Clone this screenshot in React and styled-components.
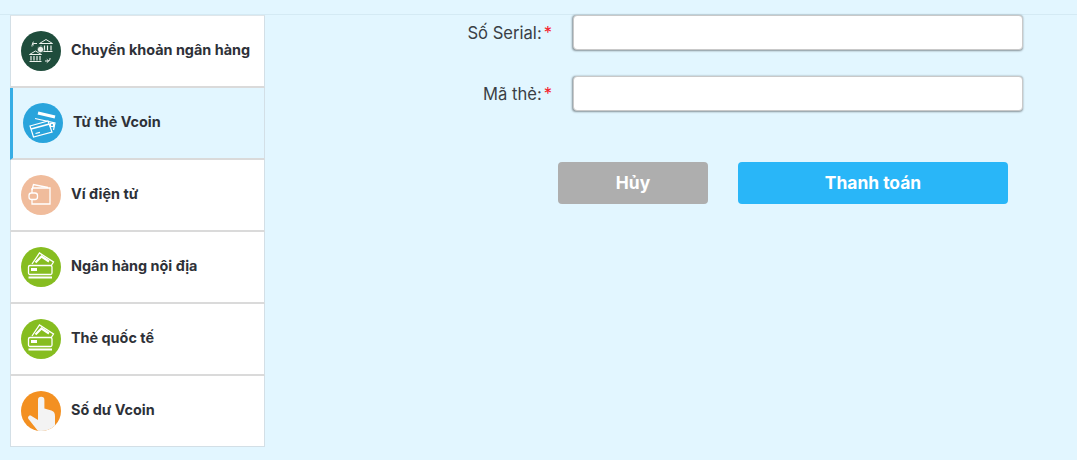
import React from 'react';
import styled, { createGlobalStyle } from 'styled-components';

const GlobalStyle = createGlobalStyle`
  html, body {
    margin: 0;
    padding: 0;
    background: #e2f6ff;
    font-family: 'Inter', 'Noto Sans', sans-serif;
  }
`;

const Page = styled.div`
  width: 1077px;
  height: 460px;
  overflow: hidden;
  background: #e2f6ff;
`;

const TopLine = styled.div`
  height: 14px;
  border-bottom: 1px solid #d4eaf4;
`;

const Main = styled.div`
  display: flex;
  padding-left: 10px;
`;

const Sidebar = styled.ul`
  list-style: none;
  margin: 0;
  padding: 0;
  width: 255px;
  flex-shrink: 0;
`;

const SideItem = styled.li`
  box-sizing: border-box;
  height: 72px;
  display: flex;
  align-items: center;
  gap: 10px;
  padding-left: 10px;
  background: ${(p) => (p.$active ? 'transparent' : '#fff')};
  border-left: ${(p) => (p.$active ? '3px solid #36ade5' : '1px solid #d3dfe6')};
  border-right: 1px solid #d3dfe6;
  border-bottom: 2px solid #dadada;

  &:first-child {
    height: 73px;
    border-top: 1px solid #dfe6ea;
  }

  &:last-child {
    height: 71px;
    border-bottom: 1px solid #d3dfe6;
  }
`;

const Circle = styled.span`
  width: 40px;
  height: 40px;
  border-radius: 50%;
  background: ${(p) => p.$color};
  flex-shrink: 0;
  overflow: hidden;
  display: block;

  svg {
    display: block;
  }
`;

const SideLabel = styled.span`
  font-size: 14.4px;
  font-weight: 650;
  line-height: 18px;
  margin-top: -2px;
  color: #2e3138;
  white-space: nowrap;
`;

const Content = styled.div`
  flex: 1;
`;

const Row = styled.div`
  display: flex;
  align-items: center;
  height: 35px;
  margin-bottom: 26px;
`;

const Label = styled.label`
  box-sizing: border-box;
  width: 287px;
  text-align: right;
  font-size: 16.6px;
  color: #3a3f45;
  white-space: nowrap;
`;

const Star = styled.span`
  color: #f5222d;
  margin-left: 2px;
`;

const Input = styled.input`
  box-sizing: border-box;
  width: 450px;
  height: 35px;
  margin-left: 21px;
  border: 1px solid #c9c9c9;
  border-radius: 4px;
  background: #fff;
  box-shadow: -0.5px 0.5px 2px rgba(0, 0, 0, 0.4);
  outline: none;
`;

const Actions = styled.div`
  display: flex;
  gap: 30px;
  margin-top: 51px;
  padding-left: 293px;
`;

const Button = styled.button`
  width: ${(p) => p.$width}px;
  height: 42px;
  padding: 0 0 2px;
  border: none;
  border-radius: 4px;
  background: ${(p) => p.$bg};
  color: #fff;
  font-family: 'Inter', 'Noto Sans', sans-serif;
  font-size: 17.4px;
  font-weight: 700;
`;

const BankIcon = () => (
  <svg width="40" height="40" viewBox="0 0 40 40" fill="none" stroke="#eef3ee" strokeWidth="1">
    <path d="M18.5 12.5 L25 8.5 L31.5 12.5 Z" />
    <path d="M20 14.5v5M23.5 14.5v5M26.5 14.5v5M30 14.5v5M18.5 20.5h13" strokeWidth="1.2" />
    <path d="M8.5 23.5 L14.5 20 L20.5 23.5 Z" />
    <path d="M10 25v4.5M13 25v4.5M16 25v4.5M19 25v4.5M8.5 30.5h12" strokeWidth="1.2" />
    <circle cx="19.5" cy="18.5" r="3.2" fill="#eef3ee" stroke="#1f4d3c" strokeWidth="0.8" />
    <path d="M16 12.5h-3a2 2 0 0 0-2 2v1M12.8 10.8 L11 12.5 L12.8 14.2M24 30h3a2 2 0 0 0 2-2v-1M25.8 28.3 L27.6 30 L25.8 31.7" />
  </svg>
);

const CardsIcon = () => (
  <svg width="40" height="40" viewBox="0 0 40 40" fill="none" stroke="#fff" strokeWidth="1.2">
    <path d="M15 10 L32 14" strokeWidth="3.2" />
    <path d="M12 15.5 L32 20 L30.5 27" />
    <path d="M7 23 L25 18 L29 29 L10.5 34 Z" fill="#29a4dc" />
    <path d="M8 26 L26.5 21" strokeWidth="1.8" />
    <path d="M12.5 30.5 L17 29.3" />
    <rect x="27.5" y="20.5" width="3" height="3" fill="#29a4dc" />
  </svg>
);

const WalletIcon = () => (
  <svg width="40" height="40" viewBox="0 0 40 40" fill="none" stroke="#fff" strokeWidth="1.3">
    <path d="M11 15 L12.5 9.5 L27 12.5" />
    <path d="M11 13 H29 V29 H11 V24.5" />
    <path d="M11 13 V18" />
    <rect x="8" y="18" width="8.5" height="6.5" rx="2.5" />
  </svg>
);

const BankCardIcon = () => (
  <svg width="40" height="40" viewBox="0 0 40 40" fill="none" stroke="#fff" strokeWidth="1.3">
    <path d="M11 17 L18.5 6 L32.5 15 L30 19" />
    <path d="M14.5 15.5 L20.5 9.5 L28 14.5" strokeWidth="2.2" />
    <rect x="7.5" y="18.5" width="23.5" height="9" rx="1.5" fill="#86bd20" />
    <rect x="10" y="21" width="6" height="3" fill="#fff" stroke="none" />
    <path d="M7.5 30.5 H31" strokeWidth="1.8" />
  </svg>
);

const HandIcon = () => (
  <svg width="40" height="40" viewBox="0 0 40 40">
    <path
      d="M17 9 a3.2 3.2 0 0 1 6.4 0 V17.5 l7 2 c3 1 3.6 3 3.6 6 V40 H17 L7.5 28 c-1.5-2 1-4.5 3-3 L17 29 Z"
      fill="#f3f3f3"
    />
  </svg>
);

const methods = [
  { label: 'Chuyển khoản ngân hàng', color: '#1f4d3c', Icon: BankIcon },
  { label: 'Từ thẻ Vcoin', color: '#29a4dc', Icon: CardsIcon, active: true },
  { label: 'Ví điện tử', color: '#f0bc9c', Icon: WalletIcon },
  { label: 'Ngân hàng nội địa', color: '#86bd20', Icon: BankCardIcon },
  { label: 'Thẻ quốc tế', color: '#86bd20', Icon: BankCardIcon },
  { label: 'Số dư Vcoin', color: '#f39021', Icon: HandIcon },
];

const App = () => (
  <Page>
    <GlobalStyle />
    <TopLine />
    <Main>
      <Sidebar>
        {methods.map(({ label, color, Icon, active }) => (
          <SideItem key={label} $active={active}>
            <Circle $color={color}>
              <Icon />
            </Circle>
            <SideLabel>{label}</SideLabel>
          </SideItem>
        ))}
      </Sidebar>
      <Content>
        <Row>
          <Label>
            Số Serial:<Star>*</Star>
          </Label>
          <Input />
        </Row>
        <Row>
          <Label>
            Mã thẻ:<Star>*</Star>
          </Label>
          <Input />
        </Row>
        <Actions>
          <Button $width={150} $bg="#aeaeae">Hủy</Button>
          <Button $width={270} $bg="#29b6f8">Thanh toán</Button>
        </Actions>
      </Content>
    </Main>
  </Page>
);

export default App;
